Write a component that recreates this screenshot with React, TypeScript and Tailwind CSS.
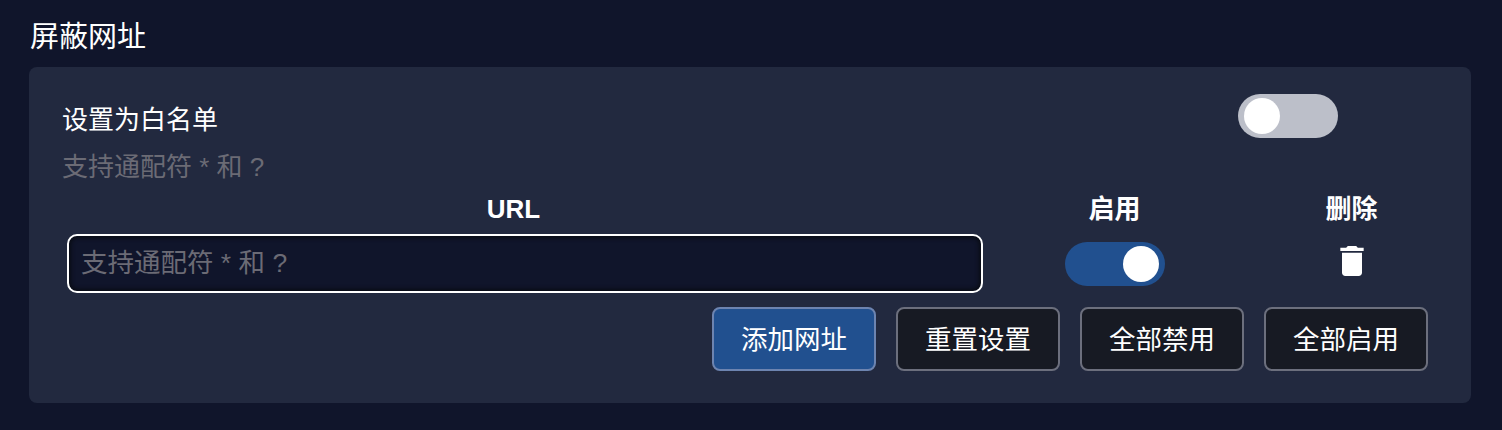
const FONT = '"Liberation Sans", "Noto Sans CJK SC", sans-serif';

function Toggle({ on }: { on: boolean }) {
  return (
    <div className={`flex h-[44px] w-[100px] items-center rounded-full px-[6px] ${on ? 'justify-end bg-[#21508f]' : 'justify-start bg-[#bcbfc9]'}`}>
      <div className="h-[36px] w-[36px] rounded-full bg-white" />
    </div>
  );
}

function Btn({ label, primary }: { label: string; primary?: boolean }) {
  return (
    <button className={`h-[64px] w-[164px] rounded-[8px] border-2 pt-[3px] text-[26.5px] text-white ${primary ? 'border-[#6d84b0] bg-[#21508f]' : 'border-[#6c6f7d] bg-[#171a23]'}`}>
      {label}
    </button>
  );
}

export default function App() {
  return (
    <main className="h-[430px] w-[1502px] overflow-hidden bg-[#10152b] text-white" style={{ fontFamily: FONT }}>
      <h2 className="pl-[30px] pt-[18px] text-[29px] leading-[38px]">屏蔽网址</h2>

      <section className="ml-[29px] mt-[11px] h-[336px] w-[1442px] rounded-[8px] bg-[#22293f] pl-[33px] pr-[43px] pt-[27px]">
        <div className="flex h-[44px] items-center justify-between pr-[90px]">
          <span className="pt-[8px] text-[26px] leading-[36px]">设置为白名单</span>
          <Toggle on={false} />
        </div>
        <p className="mt-[11px] text-[26px] leading-[36px] text-[#6b6b75]">支持通配符 * 和 ?</p>

        <div className="mt-[-1px] grid grid-cols-[921px_263px_211px] grid-rows-[50px_auto]">
          <div className="pr-[18px] text-center text-[26px] font-bold leading-[50px]">URL</div>
          <div className="text-center text-[26px] font-bold leading-[50px]">启用</div>
          <div className="text-center text-[26px] font-bold leading-[50px]">删除</div>

          <div className="pl-[5px]">
            <input
              placeholder="支持通配符 * 和 ?"
              className="h-[59px] w-[916px] rounded-[10px] border-2 border-white bg-[#10152b] px-[12px] text-[26.5px] shadow-[inset_0_0_4px_2px_#090c14] outline-none placeholder:text-[#6b6b75]"
            />
          </div>
          <div className="flex items-center justify-center">
            <Toggle on />
          </div>
          <div className="flex items-start justify-center pt-[7px]">
            <svg viewBox="0 0 24 24" className="h-[40px] w-[40px] fill-white">
              <path d="M6 19c0 1.1.9 2 2 2h8c1.1 0 2-.9 2-2V7H6v12zM19 4h-3.5l-1-1h-5l-1 1H5v2h14V4z" />
            </svg>
          </div>
        </div>

        <div className="mt-[14px] flex justify-end gap-[20px]">
          <Btn label="添加网址" primary />
          <Btn label="重置设置" />
          <Btn label="全部禁用" />
          <Btn label="全部启用" />
        </div>
      </section>
    </main>
  );
}
